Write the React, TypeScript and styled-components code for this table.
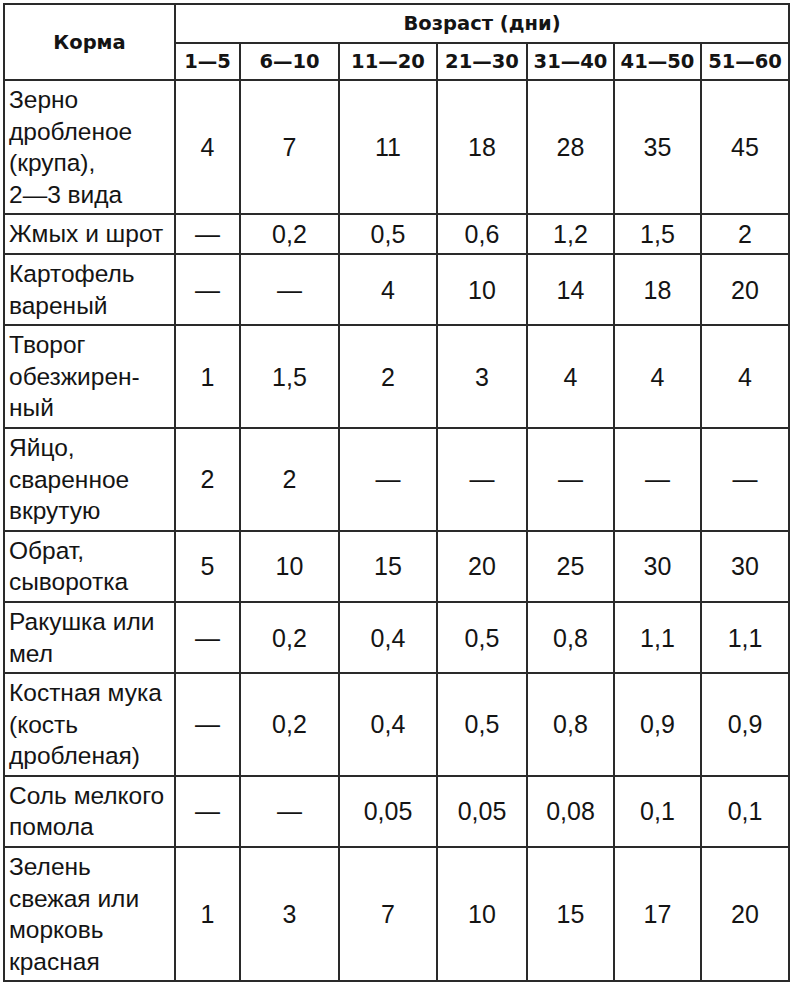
import styled, { createGlobalStyle } from 'styled-components';

const GlobalStyle = createGlobalStyle`
  html, body {
    margin: 0;
    padding: 0;
    background: #ffffff;
  }
`;

const ages = ['1—5', '6—10', '11—20', '21—30', '31—40', '41—50', '51—60'];
const colWidths = [171, 65, 99, 98, 90, 87, 87, 88];

interface FeedRow {
  name: string[];
  values: string[];
}

const rows: FeedRow[] = [
  { name: ['Зерно', 'дробленое', '(крупа),', '2—3 вида'], values: ['4', '7', '11', '18', '28', '35', '45'] },
  { name: ['Жмых и шрот'], values: ['—', '0,2', '0,5', '0,6', '1,2', '1,5', '2'] },
  { name: ['Картофель', 'вареный'], values: ['—', '—', '4', '10', '14', '18', '20'] },
  { name: ['Творог', 'обезжирен-', 'ный'], values: ['1', '1,5', '2', '3', '4', '4', '4'] },
  { name: ['Яйцо,', 'сваренное', 'вкрутую'], values: ['2', '2', '—', '—', '—', '—', '—'] },
  { name: ['Обрат,', 'сыворотка'], values: ['5', '10', '15', '20', '25', '30', '30'] },
  { name: ['Ракушка или', 'мел'], values: ['—', '0,2', '0,4', '0,5', '0,8', '1,1', '1,1'] },
  { name: ['Костная мука', '(кость', 'дробленая)'], values: ['—', '0,2', '0,4', '0,5', '0,8', '0,9', '0,9'] },
  { name: ['Соль мелкого', 'помола'], values: ['—', '—', '0,05', '0,05', '0,08', '0,1', '0,1'] },
  { name: ['Зелень', 'свежая или', 'морковь', 'красная'], values: ['1', '3', '7', '10', '15', '17', '20'] },
];

function App() {
  return (
    <Page>
      <GlobalStyle />
      <FeedTable>
        <colgroup>
          {colWidths.map((w, i) => (
            <col key={i} style={{ width: w }} />
          ))}
        </colgroup>
        <thead>
          <tr>
            <HeadCell rowSpan={2}>Корма</HeadCell>
            <HeadCell colSpan={7} $tall>Возраст (дни)</HeadCell>
          </tr>
          <tr>
            {ages.map((a) => (
              <HeadCell key={a}>{a}</HeadCell>
            ))}
          </tr>
        </thead>
        <tbody>
          {rows.map((row) => (
            <tr key={row.name.join(' ')}>
              <NameCell>
                {row.name.map((line, i) => (
                  <span key={i}>
                    {line}
                    {i < row.name.length - 1 && <br />}
                  </span>
                ))}
              </NameCell>
              {row.values.map((v, i) => (
                <ValueCell key={i}>{v}</ValueCell>
              ))}
            </tr>
          ))}
        </tbody>
      </FeedTable>
    </Page>
  );
}

const Page = styled.div`
  padding: 3px 2px 0 3px;
  width: 785px;
`;

const FeedTable = styled.table`
  width: 785px;
  table-layout: fixed;
  border-collapse: collapse;
  border: 2px solid #1e1e1e;
  color: #141414;

  td, th {
    border: 2px solid #2a2a2a;
  }
`;

const HeadCell = styled.th<{ $tall?: boolean }>`
  font-family: "DejaVu Sans", sans-serif;
  font-weight: bold;
  font-size: 19.5px;
  text-align: center;
  vertical-align: middle;
  padding: 0;
  height: ${(p) => (p.$tall ? '37px' : '35px')};
  white-space: nowrap;
`;

const NameCell = styled.td`
  font-family: "Liberation Sans", Arial, sans-serif;
  font-size: 24.5px;
  line-height: 31.6px;
  text-align: left;
  vertical-align: middle;
  padding: 3px 3px 3px 4px;
  white-space: nowrap;
`;

const ValueCell = styled.td`
  font-family: "Liberation Sans", Arial, sans-serif;
  font-size: 25px;
  line-height: 30px;
  text-align: center;
  vertical-align: middle;
  padding: 0;
`;

export default App;
